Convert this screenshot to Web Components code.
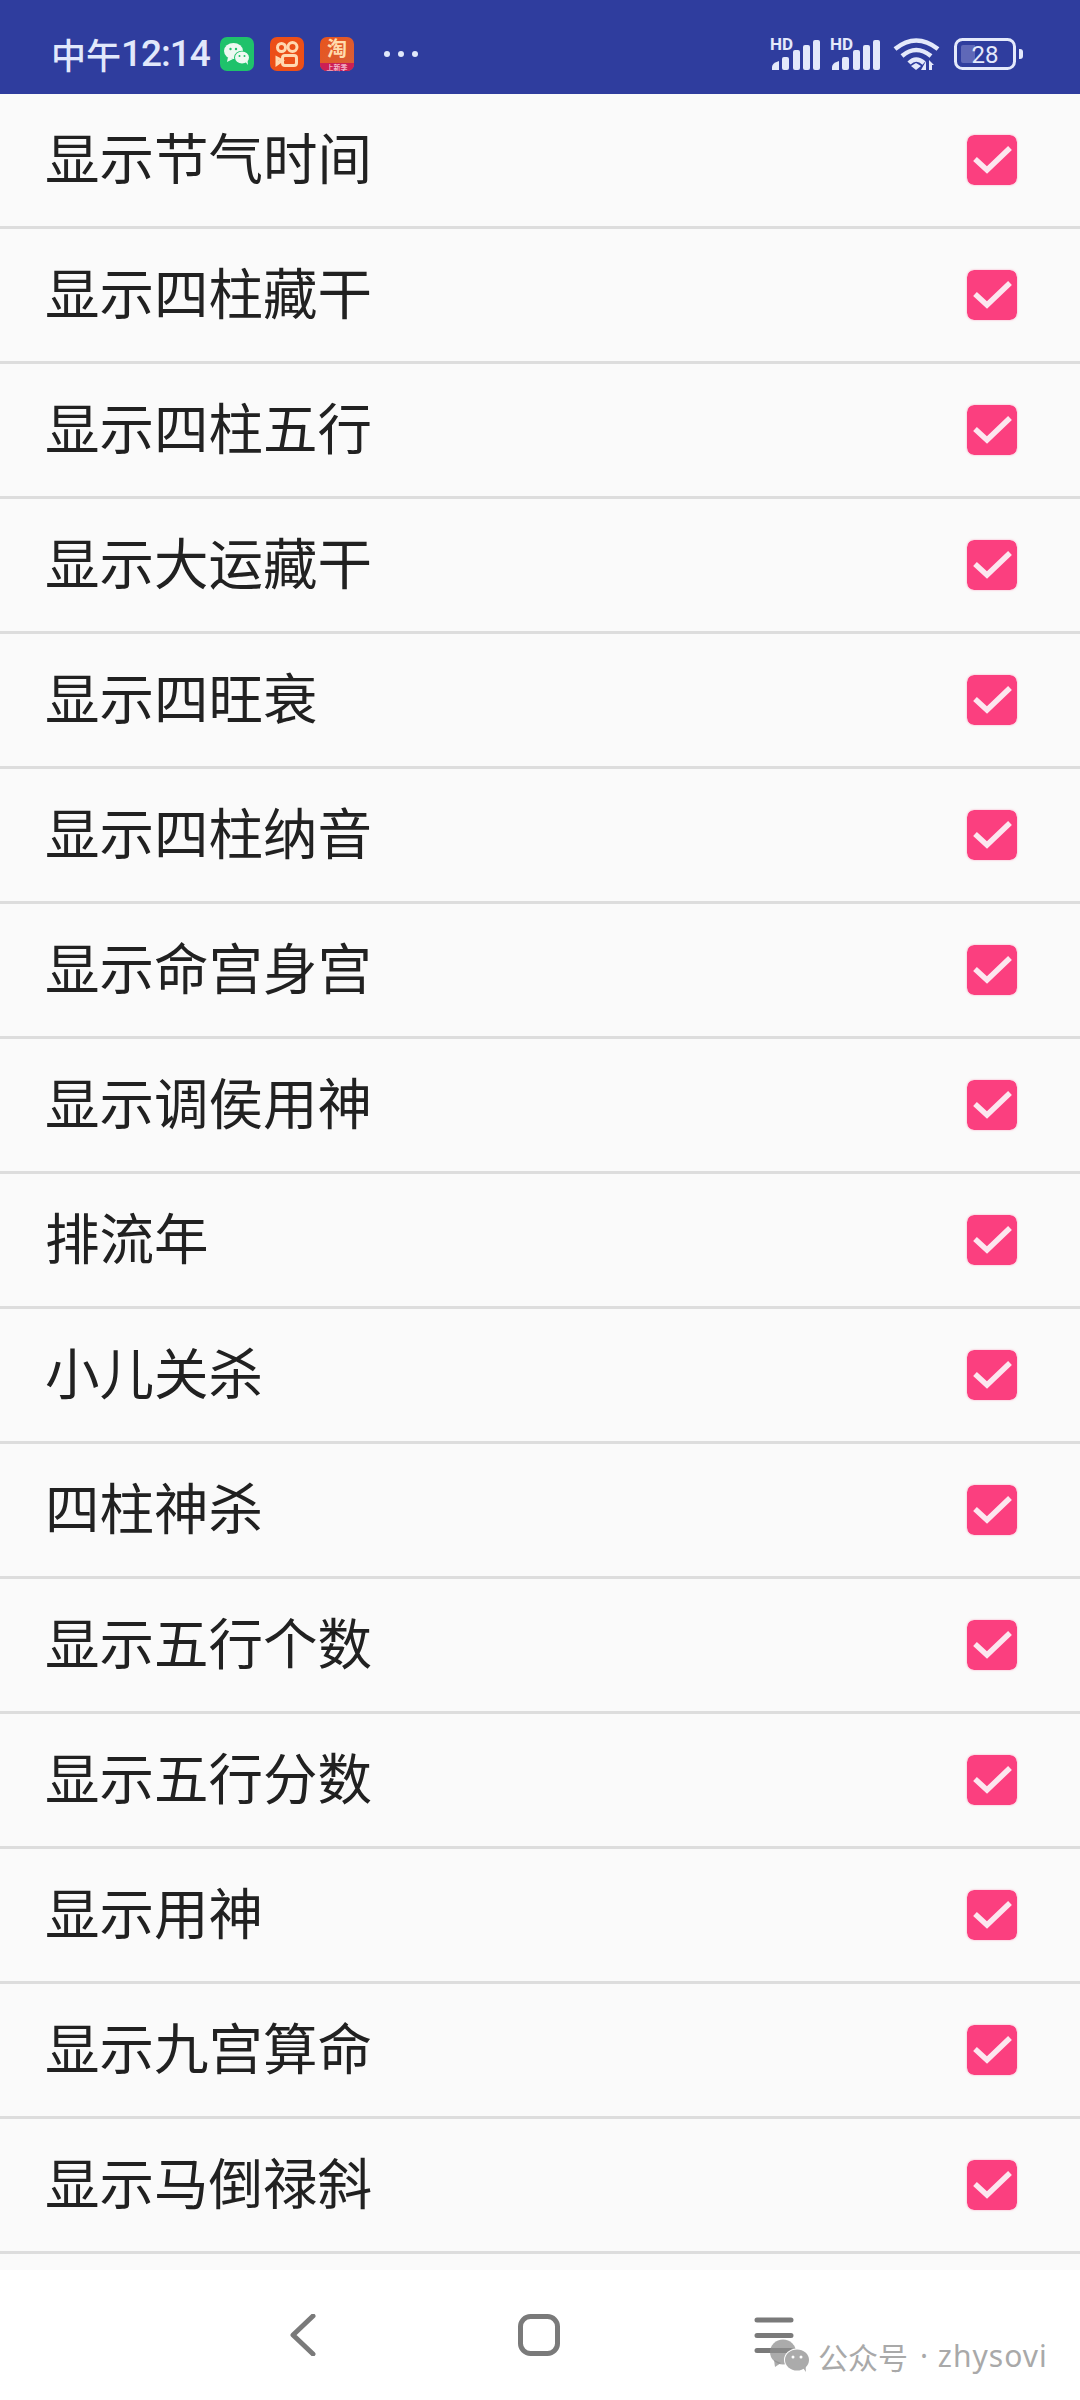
<!DOCTYPE html>
<html lang="zh">
<head>
<meta charset="utf-8">
<title>设置</title>
<style>
  html, body { margin: 0; background: #fff; }
  body { width: 1080px; height: 2400px; overflow: hidden; font-family: "Noto Sans CJK SC", "Noto Sans", sans-serif; }
  .list { display: block; background: #fafafa; padding-bottom: 16px; }
</style>
</head>
<body>
<status-bar></status-bar>
<div class="list">
  <setting-row>显示节气时间</setting-row>
  <setting-row>显示四柱藏干</setting-row>
  <setting-row>显示四柱五行</setting-row>
  <setting-row>显示大运藏干</setting-row>
  <setting-row>显示四旺衰</setting-row>
  <setting-row>显示四柱纳音</setting-row>
  <setting-row>显示命宫身宫</setting-row>
  <setting-row>显示调侯用神</setting-row>
  <setting-row>排流年</setting-row>
  <setting-row>小儿关杀</setting-row>
  <setting-row>四柱神杀</setting-row>
  <setting-row>显示五行个数</setting-row>
  <setting-row>显示五行分数</setting-row>
  <setting-row>显示用神</setting-row>
  <setting-row>显示九宫算命</setting-row>
  <setting-row>显示马倒禄斜</setting-row>
</div>
<nav-bar></nav-bar>

<script>
class StatusBar extends HTMLElement {
  constructor() {
    super();
    this.attachShadow({ mode: 'open' });
    // viewBox starts above 0 so the HD label is not clipped by the svg box
    const signal = `
      <svg width="50" height="40" viewBox="0 -3 50 40">
        <text x="0" y="13" font-family="Roboto, sans-serif" font-weight="700" font-size="17" fill="#e4e9fb">HD</text>
        <g fill="#e4e9fb">
          <path d="M2 33v-3q0-4 7-6v9z"/>
          <rect x="12" y="20" width="7" height="13" rx="2"/>
          <rect x="23" y="13" width="7" height="20" rx="2"/>
          <rect x="33" y="8" width="7" height="25" rx="2"/>
          <rect x="43" y="3" width="7" height="30" rx="2"/>
        </g>
      </svg>`;
    this.shadowRoot.innerHTML = `
      <style>
        :host {
          display: flex;
          align-items: center;
          box-sizing: border-box;
          height: 94px;
          padding: 13px 56px 0 51px;
          background: #2f3d9e;
          color: #e1e8fb;
        }
        .time {
          font: 500 37px/1 "Roboto", "Noto Sans CJK SC", sans-serif;
          letter-spacing: -1px;
          width: 169px;
          display: flex;
          align-items: center;
          white-space: nowrap;
        }
        .time span { font: 500 35px/1 "Noto Sans CJK SC", sans-serif; letter-spacing: 0; }
        .apps { display: flex; gap: 16px; }
        .app { display: block; width: 34px; height: 34px; }
        .tao {
          box-sizing: border-box;
          border-radius: 7px;
          display: flex;
          flex-direction: column;
          align-items: center;
          background: linear-gradient(135deg, #e8541c, #d8603a);
          color: #ffdcae;
          font: 700 20px/22px "Noto Sans CJK SC", sans-serif;
        }
        .tao small {
          align-self: stretch;
          margin-top: 4px;
          height: 8px;
          border-radius: 0 0 7px 7px;
          text-align: center;
          background: #cc1f55;
          color: #ffe3ee;
          font: 400 7px/9px "Noto Sans CJK SC", sans-serif;
        }
        .dots { display: flex; gap: 8px; margin-left: 30px; }
        .dots i { width: 6px; height: 6px; border-radius: 50%; background: #e1e8fb; }
        .right { margin-left: auto; display: flex; align-items: center; }
        .right svg { display: block; }
        .sig2 { margin-left: 10px; }
        .wifi { margin-left: 13px; }
        .battery { margin-left: 13px; }
      </style>
      <div class="time"><span>中午</span>12:14</div>
      <div class="apps">
        <svg class="app" viewBox="0 0 34 34">
          <rect width="34" height="34" rx="7" fill="#1fc26b"/>
          <ellipse cx="13.500" cy="14" rx="9.500" ry="8" fill="#eef9f2"/>
          <path d="M8 20l-1 5 6-3z" fill="#eef9f2"/>
          <ellipse cx="22" cy="20.500" rx="8" ry="6.800" fill="#1fc26b"/>
          <ellipse cx="22" cy="20.500" rx="7" ry="6" fill="#eef9f2"/>
          <path d="M25.500 25l2.500 3-.5-4.500z" fill="#eef9f2"/>
          <circle cx="10.500" cy="12" r="1.200" fill="#1fc26b"/><circle cx="16" cy="12" r="1.200" fill="#1fc26b"/>
          <circle cx="19.500" cy="19" r="1" fill="#1fc26b"/><circle cx="24.500" cy="19" r="1" fill="#1fc26b"/>
        </svg>
        <svg class="app" viewBox="0 0 34 34">
          <rect width="34" height="34" rx="7" fill="#ec4f17"/>
          <g fill="none" stroke="#ffd9b0" stroke-width="3">
            <circle cx="11.500" cy="10.500" r="4"/><circle cx="22.500" cy="10" r="4.500"/>
            <rect x="12.500" y="18.500" width="14" height="10" rx="2.500"/>
            <path d="M12 23.500l-5-2.500v6z"/>
          </g>
        </svg>
        <div class="app tao">淘<small>上新季</small></div>
      </div>
      <div class="dots"><i></i><i></i><i></i></div>
      <div class="right">
        <div class="sig1">${signal}</div>
        <div class="sig2">${signal}</div>
        <svg class="wifi" width="48" height="36" viewBox="0 0 48 36">
          <g fill="none" stroke="#e4e9fb" stroke-width="4.500">
            <path d="M2 13Q23-4 45 13"/>
            <path d="M9 20Q23 8 38 20"/>
            <path d="M16 27Q23 20 31 27"/>
          </g>
          <path d="M18 30l5-3 5 3-5 4z" fill="#e4e9fb"/>
          <path d="M33 34v-9l-5 9zM36 34v-10l5 5h-2v5z" fill="#e4e9fb"/>
        </svg>
        <svg class="battery" width="70" height="32" viewBox="0 0 70 32">
          <path d="M9 7h12v18H9a2 2 0 0 1-2-2V9a2 2 0 0 1 2-2z" fill="#5f68b8"/>
          <rect x="1.500" y="1.500" width="59" height="29" rx="7" fill="none" stroke="#e4e9fb" stroke-width="3"/>
          <path d="M65 11h1a3 3 0 0 1 3 3v4a3 3 0 0 1-3 3h-1z" fill="#e4e9fb"/>
          <text x="31" y="25" text-anchor="middle" font-family="Roboto, sans-serif" font-size="24" fill="#e4e9fb">28</text>
        </svg>
      </div>
    `;
  }
}

class SettingRow extends HTMLElement {
  constructor() {
    super();
    this.attachShadow({ mode: 'open' });
    this.shadowRoot.innerHTML = `
      <style>
        :host {
          display: flex;
          align-items: center;
          justify-content: space-between;
          box-sizing: border-box;
          height: 135px;
          padding: 0 63px 0 45px;
          border-bottom: 3px solid #dddddd;
          font: 400 54.500px/1 "Noto Sans CJK SC", sans-serif;
          color: #212121;
        }
        .label { margin-bottom: 8px; }
        .check {
          width: 50px;
          height: 50px;
          display: block;
          box-shadow: 0 0 2px rgba(255, 64, 129, 0.5);
          border-radius: 7px;
        }
      </style>
      <span class="label"><slot></slot></span>
      <svg class="check" viewBox="0 0 50 50">
        <rect width="50" height="50" rx="7" fill="#fb3f7f"/>
        <path d="M8 24l12 11 23-22" fill="none" stroke="#fce6ef" stroke-width="5.500"/>
      </svg>
    `;
  }
}

class NavBar extends HTMLElement {
  constructor() {
    super();
    this.attachShadow({ mode: 'open' });
    this.shadowRoot.innerHTML = `
      <style>
        :host {
          display: flex;
          position: relative;
          box-sizing: border-box;
          height: 130px;
          padding: 44px 0 0 288px;
          align-items: flex-start;
          background: #ffffff;
        }
        svg { display: block; }
        .home { margin-left: 202px; }
        .menu { margin-left: 194px; margin-top: 3px; }
        .mark {
          position: absolute;
          left: 769px;
          top: 69px;
          display: flex;
          align-items: center;
          color: #a9a9a9;
          font: 400 30px/1 "Noto Sans CJK SC", sans-serif;
          white-space: nowrap;
        }
        .mark svg { margin-right: 8px; }
        .mark b { font: 400 30px/1 "Noto Sans", sans-serif; margin-left: 12px; letter-spacing: 1px; }
      </style>
      <svg width="28" height="42" viewBox="0 0 28 42">
        <path d="M25 2L5 21l20 19" fill="none" stroke="#7a7a7a" stroke-width="5" stroke-linecap="round" stroke-linejoin="round"/>
      </svg>
      <svg class="home" width="42" height="42" viewBox="0 0 42 42">
        <rect x="2.500" y="2.500" width="37" height="37" rx="10" fill="none" stroke="#7a7a7a" stroke-width="5"/>
      </svg>
      <svg class="menu" width="40" height="36" viewBox="0 0 40 36">
        <g stroke="#7a7a7a" stroke-width="5" stroke-linecap="round">
          <path d="M3 3h34M3 18.500h34M3 33.500h34"/>
        </g>
      </svg>
      <div class="mark">
        <svg width="41" height="34" viewBox="0 0 41 34">
          <ellipse cx="14" cy="13" rx="13" ry="12.500" fill="#8f8f8f" fill-opacity="0.75"/>
          <path d="M5 21l1 7 6-4z" fill="#8f8f8f" fill-opacity="0.75"/>
          <ellipse cx="28" cy="21" rx="13" ry="11.500" fill="#ffffff"/>
          <ellipse cx="28" cy="21" rx="12" ry="10.500" fill="#ababab"/>
          <path d="M34 29l3 4-.5-6z" fill="#ababab"/>
          <circle cx="24" cy="18" r="1.500" fill="#fff"/><circle cx="32" cy="18" r="1.500" fill="#fff"/>
        </svg>
        公众号<b>· zhysovi</b>
      </div>
    `;
  }
}

customElements.define('status-bar', StatusBar);
customElements.define('setting-row', SettingRow);
customElements.define('nav-bar', NavBar);
</script>
</body>
</html>
